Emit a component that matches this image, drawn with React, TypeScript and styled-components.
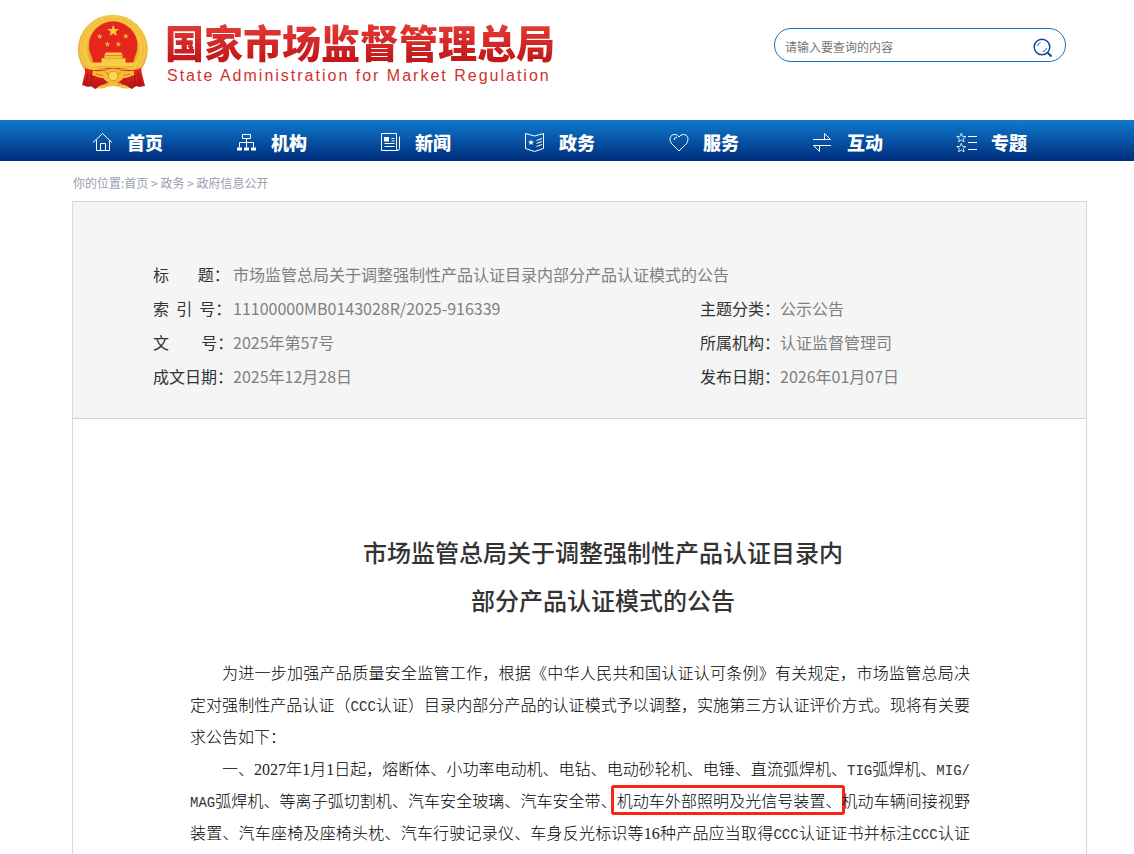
import React from "react";
import styled, { createGlobalStyle, css } from "styled-components";

const sans = `"Noto Sans CJK SC", "Noto Sans", sans-serif`;

const GlobalStyle = createGlobalStyle`
  * { box-sizing: border-box; }
  body { margin: 0; background: #fff; font-family: ${sans}; color: #333; }
  a { color: inherit; text-decoration: none; }
`;

const pageGutter = css`
  padding-left: 72px;
  padding-right: 47px;
`;

const Header = styled.header`
  ${pageGutter}
  display: flex;
  justify-content: space-between;
  align-items: flex-start;
  height: 120px;
`;

const Brand = styled.a`
  display: flex;
  gap: 15px;
  padding: 12px 0 0 4px;
`;

const BrandText = styled.span`
  display: flex;
  flex-direction: column;
  padding-top: 7px;
`;

const BrandName = styled.span`
  font-size: 39px;
  font-weight: 900;
  line-height: 44px;
  white-space: nowrap;
  background: linear-gradient(#e23a36 15%, #c4191b 90%);
  background-clip: text;
  color: transparent;
`;

const BrandSub = styled.span`
  padding-left: 2px;
  font-family: "Liberation Sans", Arial, sans-serif;
  font-size: 16px;
  line-height: 26px;
  letter-spacing: 2px;
  white-space: nowrap;
  color: #d0302e;
`;

const Search = styled.form`
  display: flex;
  align-items: center;
  width: 292px;
  height: 34px;
  margin: 28px 21px 0 0;
  padding: 4px 12px 0 10px;
  border: 1px solid #0f76c8;
  border-radius: 17px;
`;

const SearchInput = styled.input`
  flex: 1;
  min-width: 0;
  padding: 0;
  border: 0;
  outline: 0;
  background: none;
  font: 12px/20px ${sans};
  &::placeholder { color: #757575; opacity: 1; }
`;

const SearchButton = styled.button`
  display: flex;
  padding: 2px 0 0;
  border: 0;
  background: none;
  cursor: pointer;
`;

const Nav = styled.nav`
  ${pageGutter}
  display: flex;
  height: 41px;
  background: linear-gradient(#0f7acc, #002d7d);
`;

const NavLink = styled.a`
  display: flex;
  align-items: center;
  gap: 13px;
  width: 144px;
  padding: 2px 0 0 20px;
  color: #fff;
  font-size: 18px;
  font-weight: 900;
  line-height: 26px;
`;

const Crumbs = styled.nav`
  ${pageGutter}
  height: 40px;
  padding-top: 13px;
  font-size: 12px;
  line-height: 18px;
  color: #99a0ae;
  text-indent: 1px;
`;

const Panel = styled.main`
  min-height: calc(100vh - 201px);
  margin: 0 47px 0 72px;
  border: 1px solid #ccdae6;
  border-bottom: 0;
`;

const Meta = styled.dl`
  display: grid;
  grid-template-columns: 547fr 306fr;
  margin: 0;
  padding: 55px 80px 25px;
  background: #f5f5f5;
  border-bottom: 1px solid #cfd3d6;
  font-size: 16px;
  line-height: 34px;
`;

const MetaItem = styled.div<{ $wide?: boolean }>`
  display: flex;
  grid-column: ${(p) => (p.$wide ? "1 / -1" : "auto")};
`;

const MetaLabel = styled.dt`
  width: 80px;
  flex: none;
  white-space: pre;
  color: #333;
`;

const MetaValue = styled.dd`
  margin: 0;
  color: #808080;
`;

const Article = styled.article`
  padding: 109px 116px 0 117px;
`;

const Title = styled.h1`
  margin: 0 0 32px;
  padding-left: 46px;
  font-size: 24px;
  font-weight: 500;
  line-height: 48px;
  text-align: center;
`;

const Paragraph = styled.p<{ $fillLast?: boolean }>`
  margin: 0;
  font-size: 16px;
  font-weight: 300;
  line-height: 32px;
  text-align: justify;
  text-align-last: ${(p) => (p.$fillLast ? "justify" : "auto")};
  text-indent: 32px;
  text-spacing-trim: space-all;
  color: #000;
`;

const Latin = styled.span`
  font-family: "Liberation Mono", monospace;
  font-size: 14px;
  line-height: 16px;
  color: #333;
`;

const Num = styled.span`
  font-family: "Liberation Serif", serif;
  line-height: 16px;
  color: #222;
`;

const Marked = styled.mark`
  margin: 0 -3px 0 -6px;
  padding: 0 0 0 3px;
  border: 3px solid #fa2314;
  border-radius: 3px;
  background: none;
  color: inherit;
`;

const star = (cx: number, cy: number, r: number) =>
  Array.from({ length: 10 }, (_, i) => {
    const a = (Math.PI * i) / 5 - Math.PI / 2;
    const d = i % 2 ? r * 0.42 : r;
    return `${(cx + d * Math.cos(a)).toFixed(2)},${(cy + d * Math.sin(a)).toFixed(2)}`;
  }).join(" ");

const Emblem = () => (
  <svg width="74" height="80" viewBox="0 0 74 80" aria-hidden="true">
    <defs>
      <radialGradient id="gold" gradientUnits="userSpaceOnUse" cx="37" cy="36" r="35">
        <stop offset="0.66" stopColor="#d79a20" />
        <stop offset="0.78" stopColor="#f6c93f" />
        <stop offset="0.92" stopColor="#f3c544" />
        <stop offset="1" stopColor="#e3b142" />
      </radialGradient>
      <linearGradient id="drape" x1="0" y1="0" x2="0" y2="1">
        <stop offset="0" stopColor="#e8281f" />
        <stop offset="1" stopColor="#b31214" />
      </linearGradient>
    </defs>
    <ellipse cx="36.8" cy="37.5" rx="35" ry="34.8" fill="url(#gold)" />
    <ellipse cx="36.8" cy="37" rx="30.5" ry="30.5" fill="none" stroke="#cf9523" strokeWidth="1.2" strokeDasharray="2.5 2" opacity="0.3" />
    <circle cx="37.2" cy="33.5" r="24.2" fill="#e6251d" />
    <path d="M16 44h42.500l-2 12h-38.500z" fill="#e6251d" />
    <polygon points={star(37.2, 19, 6.2)} fill="#f8c93c" />
    <polygon points={star(23.7, 24.5, 3)} fill="#f2b43a" />
    <polygon points={star(49.8, 24.3, 3)} fill="#f2b43a" />
    <polygon points={star(31.4, 32.2, 3)} fill="#f2b43a" />
    <polygon points={star(42.4, 32.2, 3)} fill="#f2b43a" />
    <path d="M30 40.500h15l2 3H28zM28.500 44h18v2h3v5h-24v-5h3z" fill="#f7cb45" />
    <path d="M27.500 43.700h20M25.500 46.300h24" stroke="#dd8a26" strokeWidth="0.7" />
    <path d="M16.500 50.500h42v5.500h-42z" fill="#f8cf48" />
    <path d="M17 54.800h41" stroke="#dd9a2a" strokeWidth="0.8" />
    <path d="M9 56c3 1 6 2 10 2h36c4 0 7-1 10-2l1 6 3 12-6 1-3-1-4 3-9-4H28l-9 4-4-3-3 1-6-2 3-12z" fill="url(#drape)" />
    <path d="M12 60l-2 13M15.500 61l-.5 14M62 60l2 13M58.500 61l.5 14" stroke="#86090d" strokeWidth="1" opacity="0.5" />
    <path d="M17 58.500c5 1.500 9 0 13 0 3-2.500 11-2.500 14.500 0 4 0 8 1.500 13 0l1 4.500c-4 1-7 3-11 3-2 3-6 5-10.300 5S29 69 27 66c-4 0-7-2-11-3z" fill="#f3bd35" />
    <path d="M21 76c3-4 6-2 9-5 3-1.500 11-1.500 14.500 0 3 3 6 1 9 5-4 1-7 .5-10-1l-6.500-1-6.500 1c-3 1.500-6 2-9.500 1z" fill="#f3bd35" />
    <circle cx="37.200" cy="64" r="4.800" fill="#fad455" stroke="#cf8e22" strokeWidth="0.8" />
    <path d="M20 62l7 1.500M54.500 62l-7 1.500M27 72.500l5-.5M47.500 72.500l-5-.5M30 60.500l3 2M44.500 60.500l-3 2" stroke="#c97a1d" strokeWidth="0.9" />
  </svg>
);

const Glyph = styled.svg.attrs({ width: 22, height: 23, viewBox: "0 0 22 23", "aria-hidden": true })`
  flex: none;
  fill: none;
  stroke: #fff;
  stroke-width: 1;
`;

const SearchIcon = () => (
  <svg width="20" height="20" viewBox="0 0 20 20" fill="none" stroke="#0d469b" aria-hidden="true">
    <circle cx="9" cy="9" r="7.800" strokeWidth="1.500" />
    <path d="M14.500 14.500l4 4" strokeWidth="1.900" />
    <path d="M4.500 8A5 5 0 0 1 7.500 4.500M13.800 10A5.500 5.500 0 0 1 9.500 13.800" strokeWidth="0.900" />
  </svg>
);

const sections: { name: string; icon: React.ReactNode }[] = [
  { name: "首页", icon: <path d="M1 12.500L10.500 3.500 20 12.500M4.500 10v10.500h13V10M8.500 20.500v-7h5v7" /> },
  {
    name: "机构",
    icon: (
      <>
        <path d="M6.500 4.500h8v4h-8zM10.500 8.500v9M3.500 17.500v-5h14v5" />
        <path d="M1 17.500h5v3H1zM8 17.500h5v3H8zM15 17.500h5v3h-5z" fill="#fff" stroke="none" />
      </>
    ),
  },
  {
    name: "新闻",
    icon: (
      <>
        <path d="M16.500 3.500h-15v17h16q2 0 2-2v-12M16.500 3.500v15q0 2 1.500 2M11.500 8.500h3M11.500 11h3M4.500 13.500h10M4.500 16.500h10" />
        <path d="M4 7h5v4.500H4z" fill="#fff" stroke="none" />
      </>
    ),
  },
  {
    name: "政务",
    icon: (
      <>
        <path d="M1.500 3.500l9 2.500 9-2.500v15l-9 3-9-3zM12.500 10.500l5.500-2M12.500 13.500l5.500-2M12.500 16.500l5.500-2" />
        <polygon points={star(7, 12.5, 3.2)} fill="#fff" stroke="none" />
      </>
    ),
  },
  { name: "服务", icon: <path d="M11 21L3.500 13.500C.5 9 2.500 4.500 6.500 4.500 9 4.500 10 5.500 11 7 12 5.500 13.500 4.500 15.500 4.500 19.500 4.500 21.500 9 18.500 13.500zM6 10q0-2.500 3-3" /> },
  { name: "互动", icon: <path d="M1 9.500h17.500L12.500 3.500v6M19 15.500H1.500L7.500 21.500v-6" /> },
  {
    name: "专题",
    icon: (
      <>
        <polygon points={star(5.3, 8, 4.8)} strokeWidth="0.8" />
        <polygon points={star(5.3, 18, 4.8)} strokeWidth="0.8" />
        <path d="M12 6.500h9M12 12.500h9M12 19.500h9" />
      </>
    ),
  },
];

const meta = [
  { label: "标\u00a0\u00a0\u00a0\u00a0\u00a0\u00a0\u00a0\u00a0题：", value: "市场监管总局关于调整强制性产品认证目录内部分产品认证模式的公告", wide: true },
  { label: "索\u00a0\u00a0引\u00a0\u00a0号：", value: "11100000MB0143028R/2025-916339" },
  { label: "主题分类：", value: "公示公告" },
  { label: "文\u00a0\u00a0\u00a0\u00a0\u00a0\u00a0\u00a0\u00a0\u00a0号：", value: "2025年第57号" },
  { label: "所属机构：", value: "认证监督管理司" },
  { label: "成文日期：", value: "2025年12月28日" },
  { label: "发布日期：", value: "2026年01月07日" },
];

export default function App() {
  return (
    <>
      <GlobalStyle />
      <Header>
        <Brand href="#">
          <Emblem />
          <BrandText>
            <BrandName>国家市场监督管理总局</BrandName>
            <BrandSub>State Administration for Market Regulation</BrandSub>
          </BrandText>
        </Brand>
        <Search>
          <SearchInput type="text" aria-label="搜索" placeholder="请输入要查询的内容" />
          <SearchButton type="button" aria-label="搜索">
            <SearchIcon />
          </SearchButton>
        </Search>
      </Header>
      <Nav>
        {sections.map((s) => (
          <NavLink href="#" key={s.name}>
            <Glyph>{s.icon}</Glyph>
            {s.name}
          </NavLink>
        ))}
      </Nav>
      <Crumbs>
        你的位置:<a href="#">首页</a> &gt; <a href="#">政务</a> &gt; <a href="#">政府信息公开</a>
      </Crumbs>
      <Panel>
        <Meta>
          {meta.map((m) => (
            <MetaItem key={m.label} $wide={m.wide}>
              <MetaLabel>{m.label}</MetaLabel>
              <MetaValue>{m.value}</MetaValue>
            </MetaItem>
          ))}
        </Meta>
        <Article>
          <Title>
            市场监管总局关于调整强制性产品认证目录内
            <br />
            部分产品认证模式的公告
          </Title>
          <Paragraph>
            为进一步加强产品质量安全监管工作，根据《中华人民共和国认证认可条例》有关规定，市场监管总局决定对强制性产品认证（<Latin>CCC</Latin>认证）目录内部分产品的认证模式予以调整，实施第三方认证评价方式。现将有关要求公告如下：
          </Paragraph>
          <Paragraph $fillLast>
            一、<Num>2027</Num>年<Num>1</Num>月<Num>1</Num>日起，熔断体、小功率电动机、电钻、电动砂轮机、电锤、直流弧焊机、<Latin>TIG</Latin>弧焊机、<Latin>MIG/</Latin><wbr /><Latin>MAG</Latin>弧焊机、等离子弧切割机、汽车安全玻璃、汽车安全带、<Marked>机动车外部照明及光信号装置、</Marked>机动车辆间接视野装置、汽车座椅及座椅头枕、汽车行驶记录仪、车身反光标识等<Num>16</Num>种产品应当取得<Latin>CCC</Latin>认证证书并标注<Latin>CCC</Latin>认证
          </Paragraph>
        </Article>
      </Panel>
    </>
  );
}
